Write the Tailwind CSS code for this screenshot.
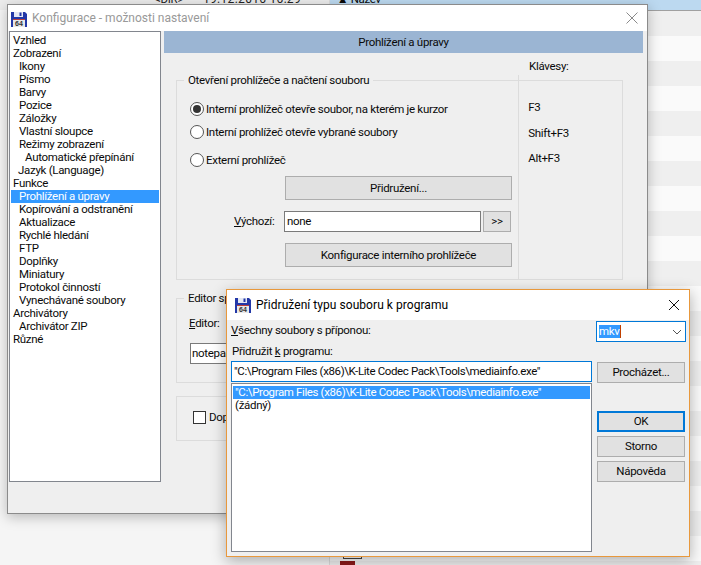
<!DOCTYPE html>
<html lang="cs">
<head>
    <meta charset="UTF-8">
    <title>Konfigurace</title>
    <script src="https://cdn.jsdelivr.net/npm/@tailwindcss/browser@4"></script>
</head>
<body class="relative w-[701px] h-[565px] overflow-hidden bg-[#f5f5f5] font-['Roboto','Liberation_Sans',sans-serif] text-[11.5px] tracking-[-0.3px] leading-[13px] text-[#0a0a0a]">

    <!-- File panel behind the windows -->
    <div class="absolute inset-0 flex">
        <div class="w-[330px] border-r border-[#dcdcdc]">
            <div class="h-[10px] flex bg-[#ececec] text-[#222] leading-[9px] overflow-hidden">
                <span class="ml-[155px] w-[28px] -mt-[5px] shrink-0">&lt;DIR&gt;</span>
                <span class="ml-[20px] -mt-[5px] text-[12px] tracking-[0.3px] whitespace-nowrap">19.12.2016 16:29</span>
            </div>
        </div>
        <div class="flex-1 flex flex-col">
            <div class="h-[11px] bg-[#bcd9f0] border-b border-[#a0a0a0] pl-[7px] leading-[9px] overflow-hidden">
                <span class="block -mt-[5px]">▲ Název</span>
            </div>
            <div class="flex-1 bg-[repeating-linear-gradient(#efefef_0,#efefef_25px,#fafafa_25px,#fafafa_50px)]"></div>
        </div>
    </div>

    <!-- Small file icon peeking out under the dialog -->
    <div class="absolute left-[340px] top-[556px] w-[22px] h-[9px]">
        <div class="ml-[3px] w-[19px] h-[3px] border-b border-x border-[#444] bg-white"></div>
        <div class="mt-[2px] w-[15px] h-[4px] bg-[#8c1a1a]"></div>
    </div>

    <!-- Main configuration window -->
    <div class="absolute left-[7px] top-[4px] w-[641px] h-[510px] border border-[#8b8b8b] bg-[#efefef] shadow-[0_3px_12px_rgba(0,0,0,0.25)] flex flex-col">
        <div class="h-[26px] shrink-0 bg-white flex items-center">
            <svg class="ml-[3px] mt-[1px]" width="16" height="16" viewBox="0 0 16 16">
                <path d="M0 1h14l2 2v13H0z" fill="#2338a8"/>
                <rect x="3" y="1" width="9" height="5" fill="#e4e8f4"/>
                <rect x="8.5" y="1.5" width="2" height="3.5" fill="#2338a8"/>
                <rect x="2" y="8" width="12" height="8" fill="#e8e8e8"/>
                <rect x="2" y="8" width="12" height="1" fill="#b8403c"/>
                <text x="8" y="15.2" text-anchor="middle" font-family="Liberation Sans" font-size="7" font-weight="700" letter-spacing="0" fill="#333">64</text>
            </svg>
            <span class="ml-[5px] text-[#999] text-[12px] tracking-normal">Konfigurace - možnosti nastavení</span>
            <svg class="ml-auto mr-[9px]" width="12" height="12" viewBox="0 0 12 12" stroke="#8a8a8a" fill="none">
                <path d="M0.5 0.5l11 11M11.5 0.5l-11 11"/>
            </svg>
        </div>

        <div class="flex-1 flex pl-[1px]">
            <!-- Tree -->
            <div class="w-[152px] h-[451px] bg-white border border-[#82868e] pt-[2px] pl-[1px] shrink-0">
                <div class="pl-[2px]">Vzhled</div>
                <div class="pl-[2px]">Zobrazení</div>
                <div class="pl-[8px]">Ikony</div>
                <div class="pl-[8px]">Písmo</div>
                <div class="pl-[8px]">Barvy</div>
                <div class="pl-[8px]">Pozice</div>
                <div class="pl-[8px]">Záložky</div>
                <div class="pl-[8px]">Vlastní sloupce</div>
                <div class="pl-[8px]">Režimy zobrazení</div>
                <div class="pl-[14px]">Automatické přepínání</div>
                <div class="pl-[7px]">Jazyk (Language)</div>
                <div class="pl-[2px]">Funkce</div>
                <div class="pl-[8px] bg-[#3399ff] text-white mr-[1px]">Prohlížení a úpravy</div>
                <div class="pl-[8px]">Kopírování a odstranění</div>
                <div class="pl-[8px]">Aktualizace</div>
                <div class="pl-[8px]">Rychlé hledání</div>
                <div class="pl-[8px]">FTP</div>
                <div class="pl-[8px]">Doplňky</div>
                <div class="pl-[8px]">Miniatury</div>
                <div class="pl-[8px]">Protokol činností</div>
                <div class="pl-[8px]">Vynechávané soubory</div>
                <div class="pl-[2px]">Archivátory</div>
                <div class="pl-[8px]">Archivátor ZIP</div>
                <div class="pl-[2px]">Různé</div>
            </div>

            <!-- Right pane -->
            <div class="ml-[3px] w-[479px]">
                <div class="h-[22px] bg-[#9bb5d3] flex items-center justify-center">Prohlížení a úpravy</div>

                <div class="h-[27px] flex items-center pl-[365px]">Klávesy:</div>

                <!-- Viewer group -->
                <div class="relative ml-[12px] w-[447px] h-[200px] border border-[#dcdcdc] flex">
                    <span class="absolute left-[7px] -top-[7px] bg-[#efefef] px-[4px]">Otevření prohlížeče a načtení souboru</span>
                    <div class="w-[342px] pl-[13px]">
                        <div class="h-[14px] mt-[21px] flex items-center">
                            <span class="w-[14px] h-[14px] rounded-full border border-[#555] bg-white flex items-center justify-center">
                                <span class="w-[8px] h-[8px] rounded-full bg-[#333]"></span>
                            </span>
                            <span class="ml-[2px] pt-[1px]">Interní prohlížeč otevře soubor, na kterém je kurzor</span>
                        </div>
                        <div class="h-[14px] mt-[9px] flex items-center">
                            <span class="w-[14px] h-[14px] rounded-full border border-[#555] bg-white"></span>
                            <span class="ml-[2px] pt-[1px]">Interní prohlížeč otevře vybrané soubory</span>
                        </div>
                        <div class="h-[14px] mt-[14px] flex items-center">
                            <span class="w-[14px] h-[14px] rounded-full border border-[#555] bg-white"></span>
                            <span class="ml-[2px] pt-[1px]">Externí prohlížeč</span>
                        </div>
                        <button class="block mt-[9px] ml-[95px] w-[227px] h-[24px] bg-[#e1e1e1] border border-[#adadad]">Přidružení...</button>
                        <div class="mt-[11px] flex items-center h-[21px]">
                            <span class="ml-[44px] w-[43px]"><span class="underline">V</span>ýchozí:</span>
                            <div class="ml-[7px] w-[197px] h-[21px] bg-white border border-[#7a7a7a] pl-[2px] flex items-center">none</div>
                            <button class="ml-[2px] w-[28px] h-[21px] bg-[#e1e1e1] border border-[#adadad]">&gt;&gt;</button>
                        </div>
                        <button class="block mt-[11px] ml-[95px] w-[227px] h-[24px] bg-[#e1e1e1] border border-[#adadad]">Konfigurace interního prohlížeče</button>
                    </div>
                    <div class="relative w-[104px] border-l border-[#dcdcdc] pl-[9px]">
                        <div class="absolute -left-[1px] -top-[6px] h-[6px] border-l border-[#dcdcdc]"></div>
                        <div class="mt-[20px]">F3</div>
                        <div class="mt-[13px]">Shift+F3</div>
                        <div class="mt-[12px]">Alt+F3</div>
                    </div>
                </div>

                <!-- Editor group, mostly under the dialog -->
                <div class="relative ml-[12px] mt-[18px] w-[447px] h-[85px] border border-[#dcdcdc] pl-[12px]">
                    <span class="absolute left-[7px] -top-[7px] bg-[#efefef] px-[4px]">Editor spouštěný klávesou F4</span>
                    <div class="mt-[18px]"><span class="underline">E</span>ditor:</div>
                    <div class="mt-[13px] ml-[1px] w-[300px] h-[21px] bg-white border border-[#7a7a7a] pl-[1px] flex items-center">notepad.exe</div>
                </div>

                <!-- Checkbox group -->
                <div class="ml-[12px] mt-[13px] w-[447px] h-[45px] border border-[#dcdcdc] pl-[16px] pt-[14px] flex items-start">
                    <span class="w-[13px] h-[13px] border border-[#333] bg-white shrink-0"></span>
                    <span class="ml-[3px]">Doplňující volby</span>
                </div>
            </div>
        </div>
    </div>

    <!-- Association dialog -->
    <div class="absolute left-[226px] top-[289px] w-[464px] h-[268px] border border-[#e8983c] bg-[#efefef] shadow-[0_4px_14px_rgba(0,0,0,0.3)] flex flex-col">
        <div class="h-[30px] shrink-0 bg-white flex items-center">
            <svg class="ml-[8px]" width="16" height="16" viewBox="0 0 16 16">
                <path d="M0 1h14l2 2v13H0z" fill="#2338a8"/>
                <rect x="3" y="1" width="9" height="5" fill="#e4e8f4"/>
                <rect x="8.5" y="1.5" width="2" height="3.5" fill="#2338a8"/>
                <rect x="2" y="8" width="12" height="8" fill="#e8e8e8"/>
                <rect x="2" y="8" width="12" height="1" fill="#b8403c"/>
                <text x="8" y="15.2" text-anchor="middle" font-family="Liberation Sans" font-size="7" font-weight="700" letter-spacing="0" fill="#333">64</text>
            </svg>
            <span class="ml-[5px] text-[12px] tracking-[0.05px] text-black">Přidružení typu souboru k programu</span>
            <svg class="ml-auto mr-[10px]" width="10" height="10" viewBox="0 0 10 10" stroke="#111" fill="none">
                <path d="M0 0l10 10M10 0L0 10"/>
            </svg>
        </div>

        <div class="flex-1 flex pl-[4px]">
            <div class="w-[361px]">
                <div class="h-[21px] flex items-center"><span class="underline">V</span>šechny soubory s příponou:</div>
                <div class="h-[20px] flex items-center pl-[1px]">Přidružit&nbsp;<span class="underline">k</span>&nbsp;programu:</div>
                <div class="h-[21px] bg-white border border-[#0078d7] pl-[2px] flex items-center whitespace-nowrap overflow-hidden tracking-[-0.38px]">"C:\Program Files (x86)\K-Lite Codec Pack\Tools\mediainfo.exe"</div>
                <div class="mt-[1px] h-[169px] bg-white border border-[#82868e] pt-[2px] px-[1px]">
                    <div class="h-[13px] bg-[#3399ff] text-white pl-[2px] whitespace-nowrap overflow-hidden tracking-[-0.38px]">"C:\Program Files (x86)\K-Lite Codec Pack\Tools\mediainfo.exe"</div>
                    <div class="pl-[2px]">(žádný)</div>
                </div>
            </div>
            <div class="ml-[4px] w-[90px] pt-[1px]">
                <div class="h-[21px] bg-white border border-[#0078d7] flex items-center pl-[2px]">
                    <span class="bg-[#3399ff] text-white border-r border-[#c04000]">mkv</span>
                    <svg class="ml-auto mr-[3px]" width="10" height="6" viewBox="0 0 10 6" stroke="#555" fill="none">
                        <path d="M1 1l4 4 4-4"/>
                    </svg>
                </div>
                <div class="ml-[1px] w-[88px] mt-[20px] flex flex-col">
                    <button class="h-[21px] bg-[#e1e1e1] border border-[#adadad]">Procházet...</button>
                    <button class="mt-[28px] h-[21px] bg-[#e1e1e1] border-2 border-[#0078d7]">OK</button>
                    <button class="mt-[4px] h-[21px] bg-[#e1e1e1] border border-[#adadad]">Storno</button>
                    <button class="mt-[4px] h-[21px] bg-[#e1e1e1] border border-[#adadad]">Nápověda</button>
                </div>
            </div>
        </div>
    </div>
</body>
</html>
